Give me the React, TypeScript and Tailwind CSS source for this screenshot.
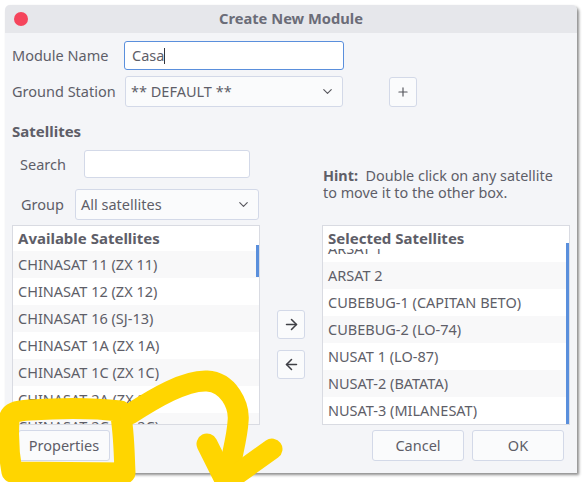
import type { ReactNode } from 'react';
import { ArrowLeft, ArrowRight, ChevronDown, Plus } from 'lucide-react';

const available = [
  'CHINASAT 11 (ZX 11)',
  'CHINASAT 12 (ZX 12)',
  'CHINASAT 16 (SJ-13)',
  'CHINASAT 1A (ZX 1A)',
  'CHINASAT 1C (ZX 1C)',
  'CHINASAT 2A (ZX 2A)',
  'CHINASAT 2C (ZX 2C)',
];

const selected = [
  'ARSAT 2',
  'CUBEBUG-1 (CAPITAN BETO)',
  'CUBEBUG-2 (LO-74)',
  'NUSAT 1 (LO-87)',
  'NUSAT-2 (BATATA)',
  'NUSAT-3 (MILANESAT)',
];

function Select({ label, className }: { label: string; className: string }) {
  return (
    <div className={`flex items-center justify-between rounded-[3px] border border-[#d3d9e8] bg-[#fafbfc] pl-[5px] pr-[7px] ${className}`}>
      <span className="pb-[2px]">{label}</span>
      <ChevronDown size={15} strokeWidth={1.8} className="text-[#55565c]" />
    </div>
  );
}

function SquareButton({ children, className }: { children: ReactNode; className: string }) {
  return (
    <div className={`flex items-center justify-center rounded-[3px] border border-[#d3d9e8] bg-[#fafbfc] text-[#55565c] ${className}`}>
      {children}
    </div>
  );
}

function TextButton({ label }: { label: string }) {
  return (
    <div className="flex h-[31px] w-[92px] items-center justify-center rounded-[3px] border border-[#d3d9e8] bg-[#fafbfc] pb-[2px]">
      {label}
    </div>
  );
}

export default function App() {
  return (
    <div className="relative h-[482px] w-[586px] overflow-hidden bg-white pl-[5px] pt-[5px] font-['Noto_Sans',sans-serif] text-[14.5px] leading-[18px] text-[#5e5e68]">
      <div className="h-[468px] w-[572px] overflow-hidden rounded-t-[5px] bg-[#f4f5f8] shadow-[2px_2px_3px_rgba(0,0,0,0.45)]">
        {/* Title bar */}
        <div className="relative flex h-[28px] items-center justify-center bg-[#e6e7eb] pb-[2px] text-[14.7px] font-bold text-[#6b6c78]">
          <div className="absolute left-[9px] top-[7px] h-[14px] w-[14px] rounded-full bg-[#f5455c]" />
          Create New Module
        </div>

        <div className="px-[7px]">
          {/* Top form */}
          <div className="mt-[8px] flex h-[29px] items-center">
            <span className="w-[112px] pb-[2px]">Module Name</span>
            <div className="flex h-[29px] w-[220px] items-center rounded-[3px] border border-[#5a8fdc] bg-white pl-[7px]">
              <span className="pb-[2px]">Casa</span>
              <span className="h-[16px] w-px bg-[#33343a]" />
            </div>
          </div>
          <div className="mt-[6px] flex h-[31px] items-center">
            <span className="w-[113px] pb-[2px]">Ground Station</span>
            <Select label="** DEFAULT **" className="h-[31px] w-[218px]" />
            <SquareButton className="ml-[46px] h-[30px] w-[28px]">
              <Plus size={14} strokeWidth={2} />
            </SquareButton>
          </div>

          {/* Lists */}
          <div className="mt-[16px] flex h-[302px]">
            <div className="flex w-[248px] shrink-0 flex-col">
              <div className="pb-[2px] text-[15px] font-bold leading-[16px]">Satellites</div>
              <div className="mt-[9px] flex h-[28px] items-center">
                <span className="ml-[8px] w-[64px]">Search</span>
                <div className="h-[28px] w-[166px] rounded-[3px] border border-[#d3d9e8] bg-white" />
              </div>
              <div className="mt-[11px] flex h-[31px] items-center">
                <span className="ml-[9px] w-[54px] pb-[2px]">Group</span>
                <Select label="All satellites" className="h-[31px] w-[184px]" />
              </div>
              <div className="relative mt-auto h-[200px] w-[248px] overflow-hidden border border-[#d9dbe2] bg-white">
                <div className="flex h-[25px] items-center pb-[2px] pl-[5px] text-[15px] font-bold">Available Satellites</div>
                {available.map((name, i) => (
                  <div key={name} className={`flex h-[27px] items-center pb-[2px] pl-[5px] ${i % 2 === 0 ? 'bg-[#f8f8f9]' : 'bg-white'}`}>
                    {name}
                  </div>
                ))}
                <div className="absolute right-0 top-[19px] h-[32px] w-[3px] bg-[#5a8fdc]" />
              </div>
            </div>

            <div className="flex w-[62px] shrink-0 flex-col items-center pt-[187px]">
              <SquareButton className="h-[29px] w-[28px]">
                <ArrowRight size={17} strokeWidth={2.2} className="text-[#3f4046]" />
              </SquareButton>
              <SquareButton className="mt-[11px] h-[29px] w-[28px]">
                <ArrowLeft size={17} strokeWidth={2.2} className="text-[#3f4046]" />
              </SquareButton>
            </div>

            <div className="flex w-[248px] shrink-0 flex-col">
              <div className="mt-[44px] pl-[1px] text-[14.4px] leading-[17px]">
                <span className="font-bold">Hint:</span>&nbsp; Double click on any satellite
                <br />
                to move it to the other box.
              </div>
              <div className="relative mt-auto h-[200px] w-[248px] overflow-hidden border border-[#d9dbe2] bg-white">
                <div className="flex h-[23px] items-center pl-[5px] text-[15px] font-bold">Selected Satellites</div>
                {/* ARSAT 1 row, scrolled mostly under the header */}
                <div className="h-[13px] overflow-hidden pl-[5px]">
                  <div className="-mt-[10px]">ARSAT 1</div>
                </div>
                {selected.map((name, i) => (
                  <div key={name} className={`flex h-[27px] items-center pb-[2px] pl-[5px] ${i % 2 === 0 ? 'bg-[#f8f8f9]' : 'bg-white'}`}>
                    {name}
                  </div>
                ))}
                <div className="absolute bottom-0 right-0 top-[17px] w-[3px] bg-[#5a8fdc]" />
              </div>
            </div>
          </div>

          {/* Footer buttons */}
          <div className="mt-[5px] flex w-[552px] justify-between pl-[6px]">
            <TextButton label="Properties" />
            <div className="flex gap-[8px]">
              <TextButton label="Cancel" />
              <TextButton label="OK" />
            </div>
          </div>
        </div>
      </div>

      {/* Yellow marker scribble drawn over the window */}
      <svg className="pointer-events-none absolute left-0 top-0" width="586" height="482" viewBox="0 0 586 482" fill="none" stroke="#ffd500" strokeWidth="21" strokeLinecap="round" strokeLinejoin="round">
        <path d="M9 420 C10 412 16 411 30 410 C60 408 95 408 120 411 C124 430 124 450 125 473 L12 472 C8 450 8 435 9 420" />
        <path d="M130 414 C155 398 185 380 207 381 C228 382 240 405 238 422 C237 440 230 460 227 486" />
        <path d="M207 444 L226 482 L272 449" />
      </svg>
    </div>
  );
}
